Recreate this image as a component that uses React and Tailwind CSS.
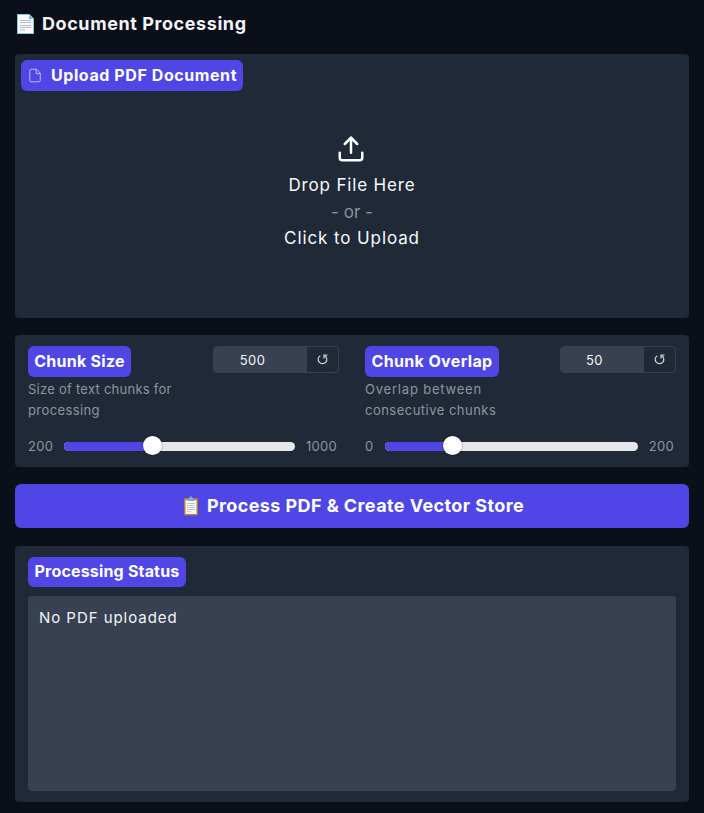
import React from "react";

function PageEmoji() {
  return (
    <svg width="17" height="20" viewBox="0 0 17 20" className="-ml-px block shrink-0">
      <path d="M.5.5H12.500l4 4V19.500H.5Z" fill="#fafafa" stroke="#8bc5db" />
      <path d="M12 0 17 5H12Z" fill="#82b9d6" />
      <path d="M3 6.500h11M3 8.500h11M3 11.500h11M3 13.500h11M3 16h5" stroke="#b5c0c5" strokeWidth="1" />
    </svg>
  );
}

function ClipboardEmoji() {
  return (
    <svg width="16" height="20" viewBox="0 0 16 20" className="block shrink-0">
      <rect x="1" y="2" width="14" height="17.500" rx="1" fill="#b97a3a" />
      <rect x="2.500" y="4" width="11" height="14" fill="#fafafa" />
      <path d="M4 5V3.300l2.500-.8Q6.700.3 8 .3t1.500 2.200l2.500.8V5Z" fill="#82aebf" />
      <path d="M4 7.500h8M4 9.500h8M4 11.500h8M4 13.500h8M4 15.700h4" stroke="#bcc5ca" strokeWidth="1" />
    </svg>
  );
}

function FileIcon() {
  return (
    <svg width="14" height="15" viewBox="0 0 24 24" preserveAspectRatio="none" fill="none" stroke="#c7c5f7" strokeWidth="1.500" strokeLinecap="round" strokeLinejoin="round" className="block shrink-0">
      <path d="M14 2H5a2 2 0 0 0-2 2v16a2 2 0 0 0 2 2h14a2 2 0 0 0 2-2V9z" />
      <path d="M14 2v7h7" />
    </svg>
  );
}

function UploadIcon() {
  return (
    <svg width="30" height="30" viewBox="0 0 24 24" fill="none" stroke="white" strokeWidth="2" strokeLinecap="round" strokeLinejoin="round" className="mr-[2px] block">
      <path d="M21 15v4a2 2 0 0 1-2 2H5a2 2 0 0 1-2-2v-4" />
      <path d="M17 8l-5-5-5 5" />
      <path d="M12 3v12" />
    </svg>
  );
}

function ResetIcon() {
  return (
    <svg width="11" height="11" viewBox="0 0 11 11" fill="none" stroke="#d1d5db" strokeWidth="1.200" className="block">
      <path d="M3.300 1.700A4.300 4.300 0 1 0 7.500 1.600" />
      <path d="M10.500 1H7v3.500" />
    </svg>
  );
}

function NumberBox({ value, className }) {
  return (
    <div className={"flex h-[27px] shrink-0 overflow-hidden rounded border border-[#374151] " + className}>
      <div className="flex flex-1 items-center justify-center bg-[#374151] pt-[2px] pr-[16px] text-[13px] tracking-[0.400px] text-[#f3f4f6]">
        <span>{value}</span>
      </div>
      <div className="flex w-[31px] items-center justify-center">
        <ResetIcon />
      </div>
    </div>
  );
}

function Slider({ min, max, fill, thumb }) {
  return (
    <div className="flex h-5 items-center pr-[2px] text-[13px] text-[#8e959f]">
      <span className="pt-[2px] tracking-[0.300px]">{min}</span>
      <div className="relative mx-[11px] h-[9px] flex-1 rounded-full bg-[#e5e7eb]">
        <div className={"h-full rounded-l-full bg-[#4f46e5] " + fill} />
        <div className={"absolute -top-[6px] h-[19px] w-[19px] rounded-full bg-white shadow-[0_0_2px_rgba(0,0,0,0.5)] " + thumb} />
      </div>
      <span className="pt-[2px] tracking-[0.300px]">{max}</span>
    </div>
  );
}

export default function App() {
  return (
    <main className="flex h-[813px] w-[704px] flex-col bg-[#0b0f19] px-[15px] font-['Inter','Open_Sans',sans-serif] whitespace-nowrap">
      <h1 className="flex h-[54px] items-start pt-[14px] pl-[3px]">
        <PageEmoji />
        <span className="ml-[8px] text-[18px] leading-5 font-bold tracking-[0.580px] text-[#f3f4f6]">Document Processing</span>
      </h1>

      <section className="flex h-[264px] flex-col rounded bg-[#1f2937] pt-[6px] pl-[6px]">
        <div className="flex h-[31px] w-[222px] items-center rounded-md bg-[#4f46e5] pl-[7px]">
          <FileIcon />
          <span className="ml-[9px] pb-[2px] text-[16px] font-bold tracking-[0.580px] text-white">Upload PDF Document</span>
        </div>
        <div className="mt-[43px] flex flex-col items-center pr-[6px] text-[17px] leading-[26.500px] text-[#f9fafb]">
          <UploadIcon />
          <div className="mt-[8px] tracking-[0.850px]">Drop File Here</div>
          <div className="tracking-[0px] text-[#8b929c]">- or -</div>
          <div className="tracking-[0.900px]">Click to Upload</div>
        </div>
      </section>

      <section className="mt-[17px] flex h-[132px] gap-[26px] rounded bg-[#1f2937] px-[13px] pt-[11px]">
        <div className="w-[311px]">
          <div className="flex h-[90px] justify-between">
            <div>
              <div className="flex h-[31px] w-[103px] items-center justify-center rounded-md bg-[#4f46e5] pb-[2px] text-[16px] font-bold tracking-[0.270px] text-white">
                <span>Chunk Size</span>
              </div>
              <p className="mt-[2px] text-[13px] leading-[21px] text-[#8e959f]">
                <span className="tracking-[0.250px]">Size of text chunks for</span>
                <br />
                <span className="tracking-[0.400px]">processing</span>
              </p>
            </div>
            <NumberBox value="500" className="w-[126px]" />
          </div>
          <Slider min="200" max="1000" fill="w-[38%]" thumb="left-[79px]" />
        </div>
        <div className="w-[311px]">
          <div className="flex h-[90px] justify-between">
            <div>
              <div className="flex h-[31px] w-[134px] items-center justify-center rounded-md bg-[#4f46e5] pb-[2px] text-[16px] font-bold tracking-[0.360px] text-white">
                <span>Chunk Overlap</span>
              </div>
              <p className="mt-[2px] text-[13px] leading-[21px] text-[#8e959f]">
                <span className="tracking-[0.800px]">Overlap between</span>
                <br />
                <span className="tracking-[0.480px]">consecutive chunks</span>
              </p>
            </div>
            <NumberBox value="50" className="w-[116px]" />
          </div>
          <Slider min="0" max="200" fill="w-[26%]" thumb="left-[58px]" />
        </div>
      </section>

      <button className="mt-[17px] flex h-[44px] shrink-0 items-center justify-center rounded-md bg-[#4f46e5] pb-px pl-[3px] text-[18px] font-bold tracking-[0.410px] text-white">
        <ClipboardEmoji />
        <span className="ml-[8px]">Process PDF &amp; Create Vector Store</span>
      </button>

      <section className="mt-[18px] h-[256px] rounded bg-[#1f2937] px-[13px] pt-[11px]">
        <div className="flex h-[30px] w-[158px] items-center justify-center rounded-md bg-[#4f46e5] pb-[2px] text-[16px] font-bold tracking-[0.180px] text-white">
          <span>Processing Status</span>
        </div>
        <div className="mt-[9px] h-[195px] rounded bg-[#374151] px-[11px] pt-[10px] text-[15px] leading-[23px] tracking-[0.950px] text-[#f3f4f6]">
          No PDF uploaded
        </div>
      </section>
    </main>
  );
}
